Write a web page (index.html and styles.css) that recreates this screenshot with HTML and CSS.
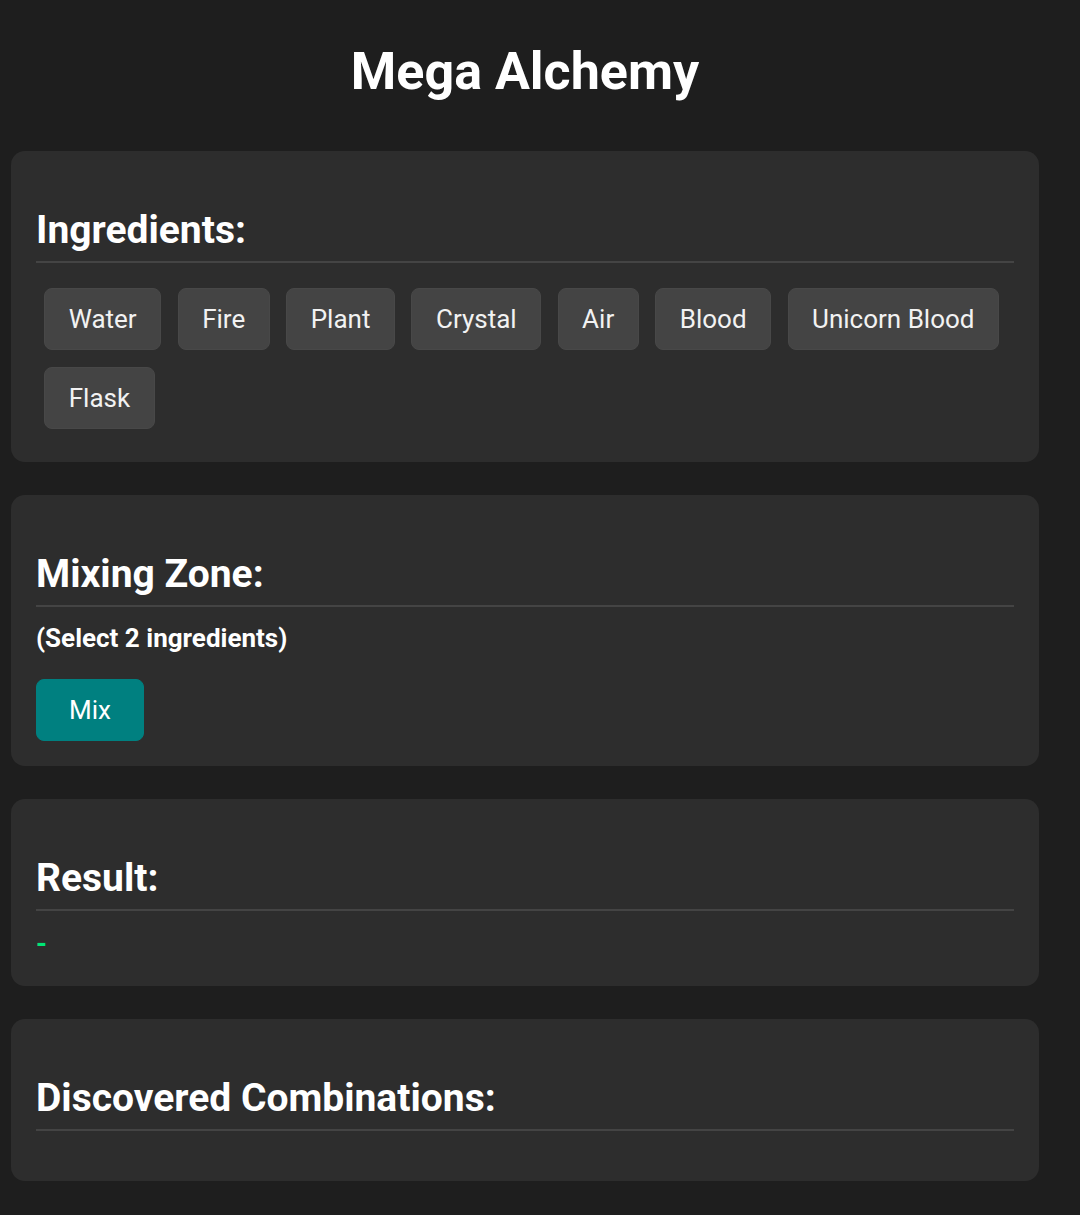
FILE: index.html
```html
<!DOCTYPE html>
<html lang="en">
<head>
<meta charset="utf-8">
<title>Mega Alchemy</title>
<link rel="stylesheet" href="styles.css">
</head>
<body>
  <h1 class="title">Mega Alchemy</h1>

  <section class="card">
    <h2 class="card-title">Ingredients:</h2>
    <div class="ingredients">
      <button class="ingredient">Water</button>
      <button class="ingredient">Fire</button>
      <button class="ingredient">Plant</button>
      <button class="ingredient">Crystal</button>
      <button class="ingredient">Air</button>
      <button class="ingredient">Blood</button>
      <button class="ingredient">Unicorn Blood</button>
      <button class="ingredient">Flask</button>
    </div>
  </section>

  <section class="card">
    <h2 class="card-title">Mixing Zone:</h2>
    <p class="hint">(Select 2 ingredients)</p>
    <button class="mix">Mix</button>
  </section>

  <section class="card">
    <h2 class="card-title">Result:</h2>
    <div class="result">-</div>
  </section>

  <section class="card">
    <h2 class="card-title">Discovered Combinations:</h2>
    <div class="combos"></div>
  </section>
</body>
</html>
```

FILE: styles.css
```css
html, body {
  background: #1e1e1e;
}

body {
  margin: 0;
  padding: 0 41px 0 11px;
  font-family: Roboto, "Noto Sans", sans-serif;
  color: #ffffff;
}

.title {
  margin: 41px 0 49px;
  font-size: 52px;
  font-weight: 700;
  text-align: center;
}

.card {
  background: #2d2d2d;
  border-radius: 14px;
  padding: 25px;
  margin-bottom: 33px;
}

.card-title {
  margin: 31px 0 16px;
  padding-bottom: 8px;
  border-bottom: 2px solid #444444;
  font-size: 39px;
  font-weight: 700;
}

.ingredients {
  display: flex;
  flex-wrap: wrap;
}

.ingredient,
.mix {
  font-family: Roboto, "Noto Sans", sans-serif;
  font-size: 26px;
  color: #f2f2f2;
  background: #444444;
  border: 1px solid #484848;
  border-radius: 8px;
  padding: 15px 23.5px;
  margin: 8.5px 8.25px;
}

.mix {
  margin: 0;
  padding: 15px 32px;
  background: #008080;
  border-color: #008080;
  color: #ffffff;
}

.hint {
  margin: 0 0 26px;
  font-size: 26px;
  font-weight: 700;
}

.result {
  font-size: 28px;
  font-weight: 700;
  line-height: 34px;
  color: #00e676;
}

.combos {
  height: 9px;
}
```
